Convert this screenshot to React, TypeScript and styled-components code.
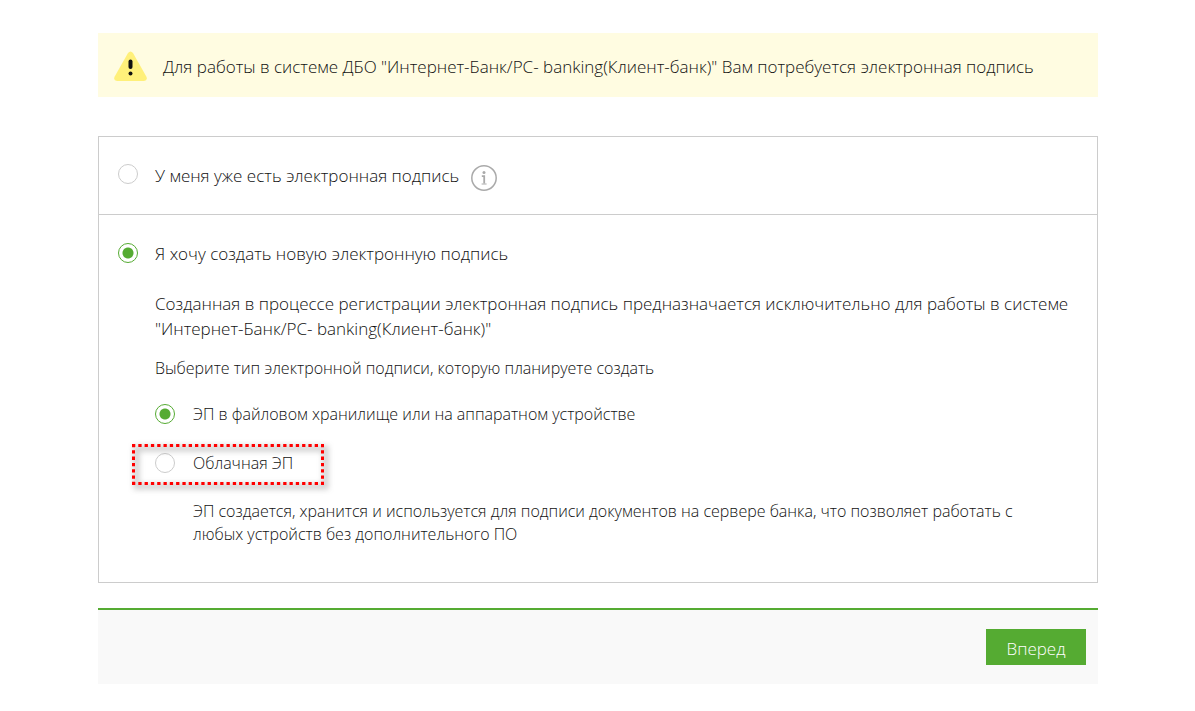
import React, { useState } from "react";
import styled, { createGlobalStyle } from "styled-components";

const GlobalStyle = createGlobalStyle`
  *, *::before, *::after { box-sizing: border-box; }
  body {
    margin: 0;
    background: #fff;
    color: #111;
    font-family: "Open Sans", "Noto Sans", sans-serif;
    font-weight: 300;
    font-size: 17px;
    line-height: 25px;
  }
`;

const Page = styled.main`
  padding: 33px 97px 27px 98px;
`;

const Notice = styled.div`
  display: flex;
  align-items: center;
  gap: 16px;
  min-height: 64px;
  padding: 2px 17px 0 16px;
  margin-bottom: 39px;
  background: #fffce1;
  font-weight: 350;
`;

const Options = styled.form`
  border: 1px solid #ccc;
`;

const Section = styled.section`
  padding: 25px 19px 26px;

  & + & {
    border-top: 1px solid #ccc;
    padding-top: 26px;
    padding-bottom: 36px;
  }
`;

const Choice = styled.label<{ $small?: boolean }>`
  display: inline-flex;
  align-items: center;
  gap: ${(p) => (p.$small ? 18 : 17)}px;
  font-size: ${(p) => (p.$small ? 16 : 17)}px;
  line-height: ${(p) => (p.$small ? 23 : 25)}px;
  cursor: pointer;
`;

const Radio = styled.input`
  appearance: none;
  flex: none;
  width: 20px;
  height: 20px;
  margin: 0 0 2px;
  border: 1px solid #ccc;
  border-radius: 50%;
  background: #fff;

  &:checked {
    border-color: #55ab32;
    background: radial-gradient(circle, #55ab32 5px, #fff 6px);
  }
`;

const ChoiceRow = styled.div`
  display: flex;
  align-items: center;
  gap: 12px;
`;

const InfoButton = styled.button`
  display: flex;
  padding: 3px 0 0;
  margin-bottom: -3px;
  border: 0;
  background: none;
  cursor: pointer;
`;

const Details = styled.div`
  padding: 25px 0 0 37px;
`;

const Paragraph = styled.p`
  margin: 0 0 16px;
`;

const Hint = styled.p`
  margin: 0 0 23px;
  font-size: 16px;
  line-height: 23px;
`;

const Highlight = styled.div`
  display: flex;
  width: 192px;
  height: 41px;
  margin: 18px 0 15px -23px;
  padding: 0 23px 2px;
  position: relative;
`;

const Outline = styled.svg`
  position: absolute;
  inset: 0;
  width: 192px;
  height: 41px;
  overflow: visible;
  pointer-events: none;
  filter: drop-shadow(3px 3px 3px rgba(0, 0, 0, 0.7));
`;

const Description = styled.p`
  max-width: 860px;
  margin: 0;
  padding-left: 38px;
  font-size: 16px;
  line-height: 23px;
`;

const Footer = styled.footer`
  display: flex;
  justify-content: flex-end;
  margin-top: 25px;
  padding: 19px 12px;
  border-top: 2px solid #55ab32;
  background: #f9f9f9;
`;

const NextButton = styled.button`
  min-width: 100px;
  height: 36px;
  padding: 3px 16px 0;
  border: 0;
  background: #55ab32;
  color: #fff;
  font: inherit;
  font-weight: 350;
  cursor: pointer;
`;

const WarningIcon = () => (
  <svg width="33" height="30" viewBox="0 0 33 30" aria-hidden="true">
    <path
      d="M14 2Q16.500-1 19 2L32.300 25.500Q34 29.500 30 30H3Q-1 29.500 .7 25.500Z"
      fill="#fff07a"
    />
    <path d="M16.500 10.500V16" stroke="#111" strokeWidth="4" strokeLinecap="round" />
    <circle cx="16.500" cy="22.500" r="2" fill="#111" />
  </svg>
);

const InfoIcon = () => (
  <svg width="26" height="26" viewBox="0 0 26 26" fill="none" aria-hidden="true">
    <circle cx="13" cy="13" r="12.200" stroke="#aaa" strokeWidth="1.500" />
    <circle cx="13" cy="7.500" r="1.500" fill="#aaa" />
    <path d="M10.800 11.200H13.200V18.500" stroke="#aaa" strokeWidth="1.800" />
    <path d="M10.600 19H15.600" stroke="#aaa" strokeWidth="1" />
  </svg>
);

export default function App() {
  const [source, setSource] = useState("new");
  const [kind, setKind] = useState("file");

  return (
    <>
      <GlobalStyle />
      <Page>
        <Notice role="note">
          <WarningIcon />
          <span>
            Для работы в системе ДБО "Интернет-Банк/PC- banking(Клиент-банк)" Вам потребуется
            электронная подпись
          </span>
        </Notice>
        <Options>
          <Section>
            <ChoiceRow>
              <Choice>
                <Radio
                  type="radio"
                  name="source"
                  checked={source === "existing"}
                  onChange={() => setSource("existing")}
                />
                У меня уже есть электронная подпись
              </Choice>
              <InfoButton type="button" aria-label="Подробнее">
                <InfoIcon />
              </InfoButton>
            </ChoiceRow>
          </Section>
          <Section>
            <ChoiceRow>
              <Choice>
                <Radio
                  type="radio"
                  name="source"
                  checked={source === "new"}
                  onChange={() => setSource("new")}
                />
                Я хочу создать новую электронную подпись
              </Choice>
            </ChoiceRow>
            <Details>
              <Paragraph>
                Созданная в процессе регистрации электронная подпись предназначается исключительно
                для работы в системе "Интернет-Банк/PC- banking(Клиент-банк)"
              </Paragraph>
              <Hint>Выберите тип электронной подписи, которую планируете создать</Hint>
              <ChoiceRow>
                <Choice $small>
                  <Radio
                    type="radio"
                    name="kind"
                    checked={kind === "file"}
                    onChange={() => setKind("file")}
                  />
                  ЭП в файловом хранилище или на аппаратном устройстве
                </Choice>
              </ChoiceRow>
              <Highlight>
                <Outline aria-hidden="true">
                  <path
                    d="M0 1.500H192M0 39.500H192M1.500 0V41M190.500 0V41"
                    fill="none"
                    stroke="#ff0000"
                    strokeWidth="3"
                    strokeDasharray="3.300 3"
                  />
                </Outline>
                <Choice $small>
                  <Radio
                    type="radio"
                    name="kind"
                    checked={kind === "cloud"}
                    onChange={() => setKind("cloud")}
                  />
                  Облачная ЭП
                </Choice>
              </Highlight>
              <Description>
                ЭП создается, хранится и используется для подписи документов на сервере банка, что
                позволяет работать с любых устройств без дополнительного ПО
              </Description>
            </Details>
          </Section>
        </Options>
        <Footer>
          <NextButton type="button">Вперед</NextButton>
        </Footer>
      </Page>
    </>
  );
}
